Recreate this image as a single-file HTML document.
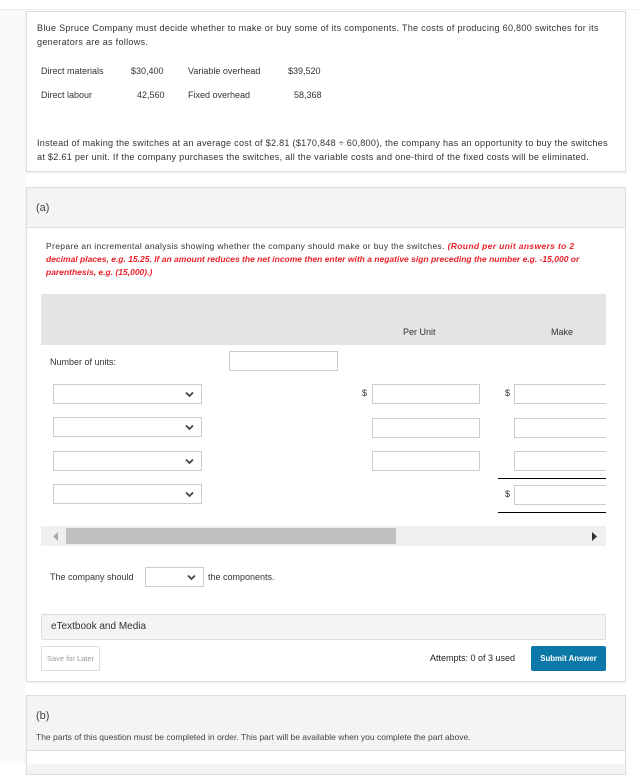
<!DOCTYPE html>
<html><head><meta charset="utf-8"><style>
*{box-sizing:border-box;margin:0;padding:0}
body{width:638px;height:764px;background:#fff;font-family:"Liberation Sans",sans-serif;color:#333;font-size:9px;position:relative;overflow:hidden}
.a{position:absolute;white-space:nowrap}
.card{position:absolute;border:1px solid #ddd;background:#fff;box-shadow:0 1px 2px rgba(0,0,0,.08)}
.in{position:absolute;border:1px solid #ccc;background:#fff;height:20px}
.sel{position:absolute;border:1px solid #ccc;background:#fff;height:20px;width:149px}
.sel svg{position:absolute;right:7px;top:6px}
.red{color:#e8202a;font-style:italic;font-weight:bold}
</style></head><body>
<div class="a" style="left:0;top:0;width:638px;height:10px;background:#fff;border-bottom:1px solid #eee"></div>
<div class="a" style="left:0;top:10px;width:26px;height:754px;background:#fafafa"></div>
<div class="card" style="left:26px;top:11px;width:600px;height:161px"></div>
<div class="a" style="left:37px;top:21px;line-height:14px;font-size:9.1px;letter-spacing:0.27px">Blue Spruce Company must decide whether to make or buy some of its components. The costs of producing 60,800 switches for its<br>generators are as follows.</div>
<div class="a" style="left:41px;top:66px">Direct materials</div>
<div class="a" style="left:131px;top:66px">$30,400</div>
<div class="a" style="left:188px;top:66px">Variable overhead</div>
<div class="a" style="left:288px;top:66px">$39,520</div>
<div class="a" style="left:41px;top:90px">Direct labour</div>
<div class="a" style="left:137px;top:90px">42,560</div>
<div class="a" style="left:188px;top:90px">Fixed overhead</div>
<div class="a" style="left:294px;top:90px">58,368</div>
<div class="a" style="left:37px;top:136px;line-height:14px;font-size:9.1px;letter-spacing:0.27px">Instead of making the switches at an average cost of $2.81 ($170,848 ÷ 60,800), the company has an opportunity to buy the switches<br>at $2.61 per unit. If the company purchases the switches, all the variable costs and one-third of the fixed costs will be eliminated.</div>

<div class="card" style="left:26px;top:187px;width:600px;height:495px"></div>
<div class="a" style="left:27px;top:188px;width:598px;height:40px;background:#f4f4f4;border-bottom:1px solid #ddd"></div>
<div class="a" style="left:36px;top:202px;font-size:11px;color:#444">(a)</div>
<div class="a" style="left:46px;top:240px;line-height:13px;font-size:8.5px"><span style="letter-spacing:0.35px">Prepare an incremental analysis showing whether the company should make or buy the switches. <span class="red">(Round per unit answers to 2</span></span><br><span class="red">decimal places, e.g. 15.25. If an amount reduces the net income then enter with a negative sign preceding the number e.g. -15,000 or</span><br><span class="red">parenthesis, e.g. (15,000).)</span></div>
<div class="a" style="left:41px;top:294px;width:565px;height:51px;background:#e4e4e4"></div>
<div class="a" style="left:403px;top:327px">Per Unit</div>
<div class="a" style="left:551px;top:327px">Make</div>
<div class="a" style="left:50px;top:357px">Number of units:</div>
<div class="in" style="left:229px;top:351px;width:109px"></div>

<div class="sel" style="left:53px;top:384px"><svg width="9" height="7"><path d="M1 1.5L4.5 5 8 1.5" stroke="#444" stroke-width="1.8" fill="none"/></svg></div>
<div class="sel" style="left:53px;top:417px"><svg width="9" height="7"><path d="M1 1.5L4.5 5 8 1.5" stroke="#444" stroke-width="1.8" fill="none"/></svg></div>
<div class="sel" style="left:53px;top:451px"><svg width="9" height="7"><path d="M1 1.5L4.5 5 8 1.5" stroke="#444" stroke-width="1.8" fill="none"/></svg></div>
<div class="sel" style="left:53px;top:484px"><svg width="9" height="7"><path d="M1 1.5L4.5 5 8 1.5" stroke="#444" stroke-width="1.8" fill="none"/></svg></div>

<div class="a" style="left:362px;top:388px">$</div>
<div class="in" style="left:372px;top:384px;width:108px"></div>
<div class="in" style="left:372px;top:418px;width:108px"></div>
<div class="in" style="left:372px;top:451px;width:108px"></div>
<div class="a" style="left:505px;top:388px">$</div>
<div class="in" style="left:514px;top:384px;width:100px"></div>
<div class="in" style="left:514px;top:418px;width:100px"></div>
<div class="in" style="left:514px;top:451px;width:100px"></div>
<div class="a" style="left:498px;top:478px;width:108px;height:1px;background:#000"></div>
<div class="a" style="left:505px;top:489px">$</div>
<div class="in" style="left:514px;top:485px;width:100px"></div>
<div class="a" style="left:498px;top:512px;width:108px;height:1px;background:#000"></div>
<div class="a" style="left:606px;top:370px;width:19px;height:160px;background:#fff"></div>

<div class="a" style="left:41px;top:526px;width:565px;height:20px;background:#f0f0f0"></div>
<div class="a" style="left:66px;top:528px;width:330px;height:16px;background:#c0c0c0"></div>
<svg class="a" style="left:53px;top:532px" width="6" height="9"><path d="M5 0L0 4.5 5 9z" fill="#aaa"/></svg>
<svg class="a" style="left:592px;top:532px" width="6" height="9"><path d="M0 0L5 4.5 0 9z" fill="#333"/></svg>

<div class="a" style="left:50px;top:572px">The company should</div>
<div class="sel" style="left:145px;top:567px;width:59px"><svg width="9" height="7"><path d="M1 1.5L4.5 5 8 1.5" stroke="#444" stroke-width="1.8" fill="none"/></svg></div>
<div class="a" style="left:208px;top:572px">the components.</div>

<div class="a" style="left:41px;top:614px;width:565px;height:26px;background:#f4f4f4;border:1px solid #ddd;border-radius:2px"></div>
<div class="a" style="left:51px;top:621px;font-size:10px">eTextbook and Media</div>
<div class="a" style="left:41px;top:646px;width:59px;height:25px;border:1px solid #ddd;border-radius:2px;font-size:7.5px;color:#999;text-align:center;line-height:23px">Save for Later</div>
<div class="a" style="left:430px;top:653px;font-size:9px;color:#222">Attempts: 0 of 3 used</div>
<div class="a" style="left:531px;top:646px;width:75px;height:25px;background:#0b78a8;border-radius:2px;color:#fff;font-size:7.8px;font-weight:bold;text-align:center;line-height:25px">Submit Answer</div>

<div class="card" style="left:26px;top:695px;width:600px;height:80px;background:#f4f4f4"></div>
<div class="a" style="left:27px;top:750px;width:598px;height:14px;background:#fff;border-top:1px solid #ddd"></div>
<div class="a" style="left:36px;top:710px;font-size:11px;color:#444">(b)</div>
<div class="a" style="left:36px;top:732px;font-size:8.5px;color:#444">The parts of this question must be completed in order. This part will be available when you complete the part above.</div>
</body></html>
